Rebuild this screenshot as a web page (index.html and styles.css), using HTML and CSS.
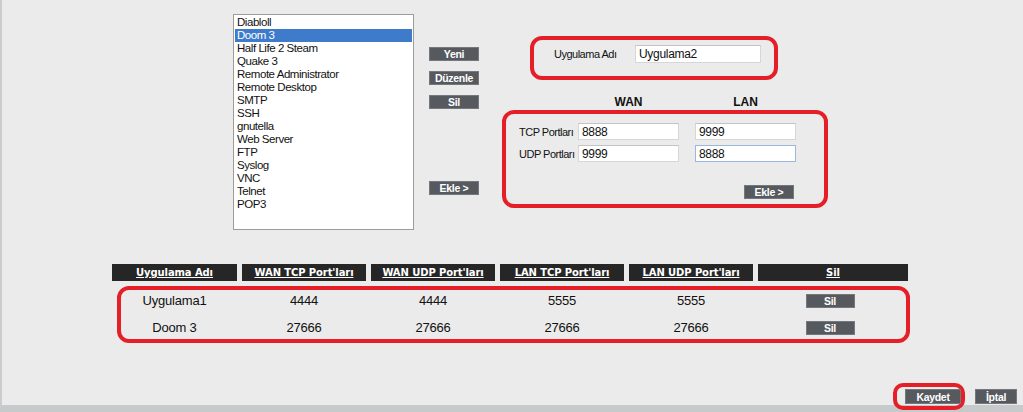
FILE: index.html
```html
<!DOCTYPE html>
<html lang="tr">
<head>
<meta charset="utf-8">
<title>Uygulama</title>
<link rel="stylesheet" href="styles.css">
</head>
<body>
<div class="page">
  <div class="top">
    <div class="listbox">
      <div class="opt">Diabloll</div>
      <div class="opt sel">Doom 3</div>
      <div class="opt">Half Life 2 Steam</div>
      <div class="opt">Quake 3</div>
      <div class="opt">Remote Administrator</div>
      <div class="opt">Remote Desktop</div>
      <div class="opt">SMTP</div>
      <div class="opt">SSH</div>
      <div class="opt">gnutella</div>
      <div class="opt">Web Server</div>
      <div class="opt">FTP</div>
      <div class="opt">Syslog</div>
      <div class="opt">VNC</div>
      <div class="opt">Telnet</div>
      <div class="opt">POP3</div>
    </div>
    <div class="btncol">
      <span class="btn">Yeni</span>
      <span class="btn">Düzenle</span>
      <span class="btn">Sil</span>
      <span class="btn btn-ekle">Ekle &gt;</span>
    </div>
    <div class="form">
      <div class="redbox namebox">
        <span class="lbl">Uygulama Adı</span>
        <span class="inp name-inp">Uygulama2</span>
      </div>
      <div class="heads">
        <span class="head">WAN</span>
        <span class="head">LAN</span>
      </div>
      <div class="redbox portbox">
        <div class="prow">
          <span class="lbl plbl">TCP Portları</span>
          <span class="inp port-inp">8888</span>
          <span class="inp port-inp">9999</span>
        </div>
        <div class="prow">
          <span class="lbl plbl">UDP Portları</span>
          <span class="inp port-inp">9999</span>
          <span class="inp port-inp focus">8888</span>
        </div>
        <div class="ekle-row"><span class="btn">Ekle &gt;</span></div>
      </div>
    </div>
  </div>

  <div class="tablewrap">
    <div class="grid thead">
      <span class="th">Uygulama Adı</span>
      <span class="th">WAN TCP Port'ları</span>
      <span class="th">WAN UDP Port'ları</span>
      <span class="th">LAN TCP Port'ları</span>
      <span class="th">LAN UDP Port'ları</span>
      <span class="th">Sil</span>
    </div>
    <div class="redbox rowsbox">
      <div class="grid trow">
        <span class="td">Uygulama1</span>
        <span class="td">4444</span>
        <span class="td">4444</span>
        <span class="td">5555</span>
        <span class="td">5555</span>
        <span class="td"><span class="btn btn-sil">Sil</span></span>
      </div>
      <div class="grid trow">
        <span class="td">Doom 3</span>
        <span class="td">27666</span>
        <span class="td">27666</span>
        <span class="td">27666</span>
        <span class="td">27666</span>
        <span class="td"><span class="btn btn-sil">Sil</span></span>
      </div>
    </div>
  </div>

  <div class="footer">
    <div class="redbox savebox"><span class="btn btn-save">Kaydet</span></div>
    <span class="btn btn-cancel">İptal</span>
  </div>
</div>
</body>
</html>
```

FILE: styles.css
```css
* { box-sizing: border-box; }
html, body { margin: 0; padding: 0; }
body {
  background: #ebebeb;
  font-family: "Liberation Sans", Arial, sans-serif;
  color: #111;
  width: 1023px;
  height: 412px;
  overflow: hidden;
}
.page {
  height: 412px;
  border-left: 2px solid #c9cdcd;
  border-bottom: 7px solid #c6caca;
}

/* top area */
.top {
  display: flex;
  align-items: flex-start;
  padding: 14px 0 0 231px;
  height: 250px;
}
.listbox {
  width: 181px;
  height: 216px;
  background: #fff;
  border: 1px solid #9c9c9c;
  padding: 1px;
  font-size: 11.5px;
  letter-spacing: -0.45px;
  line-height: 13px;
}
.opt { padding-left: 2px; height: 13px; white-space: nowrap; }
.opt.sel { background: #3f7bcb; color: #fff; }

.btncol {
  display: flex;
  flex-direction: column;
  align-items: flex-start;
  margin-left: 15px;
  padding-top: 33px;
}
.btn {
  display: inline-flex;
  align-items: center;
  justify-content: center;
  background: #565a5f;
  border: 1px solid #74787c;
  color: #fff;
  font-weight: bold;
  font-size: 10.5px;
  letter-spacing: -0.3px;
  height: 15px;
  width: 50px;
  white-space: nowrap;
}
.btncol .btn { height: 14px; }
.btncol .btn + .btn { margin-top: 10px; }
.btncol .btn + .btn-ekle { margin-top: 72px; }

.form {
  margin-left: 23px;
  padding-top: 22px;
  width: 326px;
}
.redbox {
  border: 4px solid #e41f27;
  border-radius: 12px;
}
.namebox {
  margin-left: 28px;
  width: 248px;
  height: 44px;
  display: flex;
  align-items: flex-start;
  padding: 5px 0 0 20px;
}
.lbl {
  font-size: 11px;
  letter-spacing: -0.5px;
}
.namebox .lbl { width: 81px; line-height: 18px; }
.inp {
  display: inline-flex;
  align-items: center;
  background: #fff;
  border: 1px solid #d6d6d6;
  border-top-color: #c4c4c4;
  font-size: 12px;
  letter-spacing: -0.3px;
  padding-left: 3px;
}
.name-inp { width: 126px; height: 18px; }

.heads {
  display: flex;
  gap: 16px;
  padding-left: 76px;
  margin-top: 14px;
  height: 16px;
}
.head {
  width: 101px;
  text-align: center;
  font-weight: bold;
  font-size: 12px;
  line-height: 16px;
}

.portbox {
  height: 98px;
  padding: 9px 0 0 13px;
}
.prow {
  display: flex;
  align-items: center;
  height: 17px;
  margin-bottom: 5px;
}
.plbl { width: 59px; white-space: nowrap; }
.port-inp { width: 101px; height: 17px; }
.port-inp + .port-inp { margin-left: 16px; }
.port-inp.focus { border-color: #9bb8dc; }
.ekle-row { padding: 15px 0 0 225px; }
.ekle-row .btn { height: 14px; }

/* table */
.tablewrap { padding: 14px 0 0 110px; }
.grid {
  display: grid;
  grid-template-columns: 125px 124px 124px 124px 124px 150px;
  column-gap: 5px;
}
.thead { height: 17px; }
.th {
  background: #262626;
  color: #fff;
  font-family: "DejaVu Sans", Verdana, sans-serif;
  font-weight: bold;
  font-size: 10px;
  letter-spacing: -0.1px;
  text-decoration: underline;
  text-align: center;
  line-height: 17px;
  white-space: nowrap;
}
.rowsbox {
  margin: 5px 0 0 5px;
  width: 793px;
  height: 57px;
}
.rowsbox .grid { margin-left: -9px; }
.trow { height: 21px; }
.trow + .trow { margin-top: 6px; }
.td {
  display: flex;
  align-items: center;
  justify-content: center;
  font-size: 13px;
  letter-spacing: -0.2px;
}
.btn-sil { width: 49px; height: 14px; margin-left: -6px; }

/* footer */
.footer {
  display: flex;
  align-items: flex-start;
  justify-content: flex-end;
  padding-right: 6px;
  margin-top: 40px;
}
.savebox {
  width: 72px;
  height: 27px;
  display: flex;
  align-items: center;
  justify-content: flex-start;
  padding-left: 8px;
  border-radius: 10px;
}
.btn-save { width: 56px; flex-shrink: 0; }
.btn-cancel { width: 42px; margin-left: 10px; margin-top: 6px; }
```
